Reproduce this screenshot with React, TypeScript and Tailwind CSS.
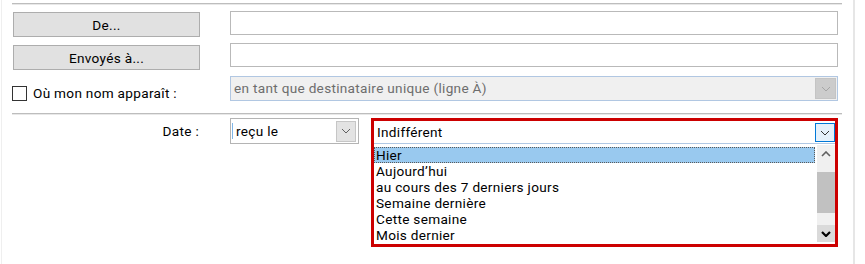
import React from 'react';

function Chevron({ up = false, color = '#606060', width = 1, size = 10 }: { up?: boolean; color?: string; width?: number; size?: number }) {
  const h = size / 2 + 1;
  const d = up ? `M1 ${h - 1}L${size / 2} 1L${size - 1} ${h - 1}` : `M1 1L${size / 2} ${h - 1}L${size - 1} 1`;
  return (
    <svg width={size} height={h} viewBox={`0 0 ${size} ${h}`} fill="none">
      <path d={d} stroke={color} strokeWidth={width} />
    </svg>
  );
}

function Separator({ className = '' }: { className?: string }) {
  return <div className={`ml-[10px] h-[2px] w-[830px] border-t border-[#bdbdbd] bg-[#e8e8e8] ${className}`} />;
}

function PushButton({ label }: { label: string }) {
  return (
    <div className="ml-[11px] flex h-[25px] w-[187px] justify-center border border-[#adadad] bg-[#e1e1e1] pt-[4px] leading-[16px]">
      {label}
    </div>
  );
}

const items = ['Aujourd’hui', 'au cours des 7 derniers jours', 'Semaine dernière', 'Cette semaine', 'Mois dernier'];

export default function App() {
  return (
    <div className="flex h-[264px] w-[865px] bg-white font-['Roboto',sans-serif] text-[13.6px] tracking-[0.3px] text-black">
      <div className="ml-px w-px bg-[#efefef]" />
      <div className="flex w-[851px] flex-col">
        <Separator className="mt-[3px]" />

        {/* De... */}
        <div className="mt-[6px] flex h-[26px] items-start">
          <div className="w-[228px] shrink-0 pt-px">
            <PushButton label="De..." />
          </div>
          <div className="h-[24px] w-[608px] border border-[#b9b9b9] bg-white" />
        </div>

        {/* Envoyés à... */}
        <div className="mt-[6px] flex h-[28px] items-start">
          <div className="w-[228px] shrink-0 pt-[2px]">
            <PushButton label="Envoyés à..." />
          </div>
          <div className="h-[24px] w-[608px] border border-[#b9b9b9] bg-white" />
        </div>

        {/* Où mon nom apparaît */}
        <div className="mt-[5px] flex h-[25px] items-start">
          <div className="flex w-[228px] shrink-0 items-center gap-[6px] pl-[10px] pt-[9px]">
            <div className="h-[15px] w-[15px] border border-[#333333] bg-white" />
            <span className="leading-[16px]">Où mon nom apparaît :</span>
          </div>
          <div className="flex h-[25px] w-[608px] items-center border border-[#b1c7e2] bg-[#f0f0f0]">
            <span className="flex-1 pl-[3px] text-[#6d6d6d]">en tant que destinataire unique (ligne À)</span>
            <div className="mr-px flex h-[21px] w-[21px] items-center justify-center border border-[#c4c4c4] bg-[#cccccc]">
              <Chevron color="#a5a5a5" />
            </div>
          </div>
        </div>

        <Separator className="mt-[12px]" />

        {/* Date */}
        <div className="mt-[3px] flex items-start">
          <div className="w-[228px] shrink-0 pr-[31px] pt-[5px] text-right leading-[16px]">Date :</div>
          <div className="flex h-[26px] w-[129px] items-center border border-[#b4b4b4] bg-white">
            <div className="ml-px h-[16px] w-px bg-[#7fb6e8]" />
            <span className="flex-1 pl-[3px]">reçu le</span>
            <div className="mr-[2px] flex h-[21px] w-[20px] items-center justify-center border border-[#c6c6c6] bg-[#e3e3e3]">
              <Chevron />
            </div>
          </div>

          <div className="ml-[12px] flex h-[129px] w-[467px] flex-col border-[3px] border-[#cc0000] bg-white">
            <div className="flex h-[22px] items-start">
              <span className="flex-1 pl-[3px] pt-[3px] leading-[16px]">Indifférent</span>
              <div className="mt-[2px] flex h-[19px] w-[20px] items-center justify-center border border-[#0078d7] bg-[#e5f1fb]">
                <Chevron color="#333333" />
              </div>
            </div>
            <div className="h-px bg-[#b0c8e4]" />
            <div className="flex h-[100px]">
              <div className="w-[443px] pt-[3px]">
                <div className="mr-[2px] h-[16px] border border-dotted border-[#5a5a5a] bg-[#99c9ef] pl-px leading-[14px]">Hier</div>
                {items.map(t => (
                  <div key={t} className="h-[16px] pl-[2px] leading-[16px]">{t}</div>
                ))}
              </div>
              <div className="flex w-[18px] flex-col pt-px">
                <div className="flex h-[17px] items-center justify-center bg-[#f0f0f0]">
                  <Chevron up color="#606060" width={1.6} size={10} />
                </div>
                <div className="h-[10px] bg-[#f0f0f0]" />
                <div className="h-[41px] bg-[#c1c1c1]" />
                <div className="h-[12px] bg-[#f0f0f0]" />
                <div className="flex h-[17px] items-center justify-center bg-[#dadada]">
                  <Chevron color="#000000" width={2.2} size={10} />
                </div>
              </div>
            </div>
          </div>
        </div>
      </div>
      <div className="w-[2px] bg-[#e6e6e6]" />
    </div>
  );
}
